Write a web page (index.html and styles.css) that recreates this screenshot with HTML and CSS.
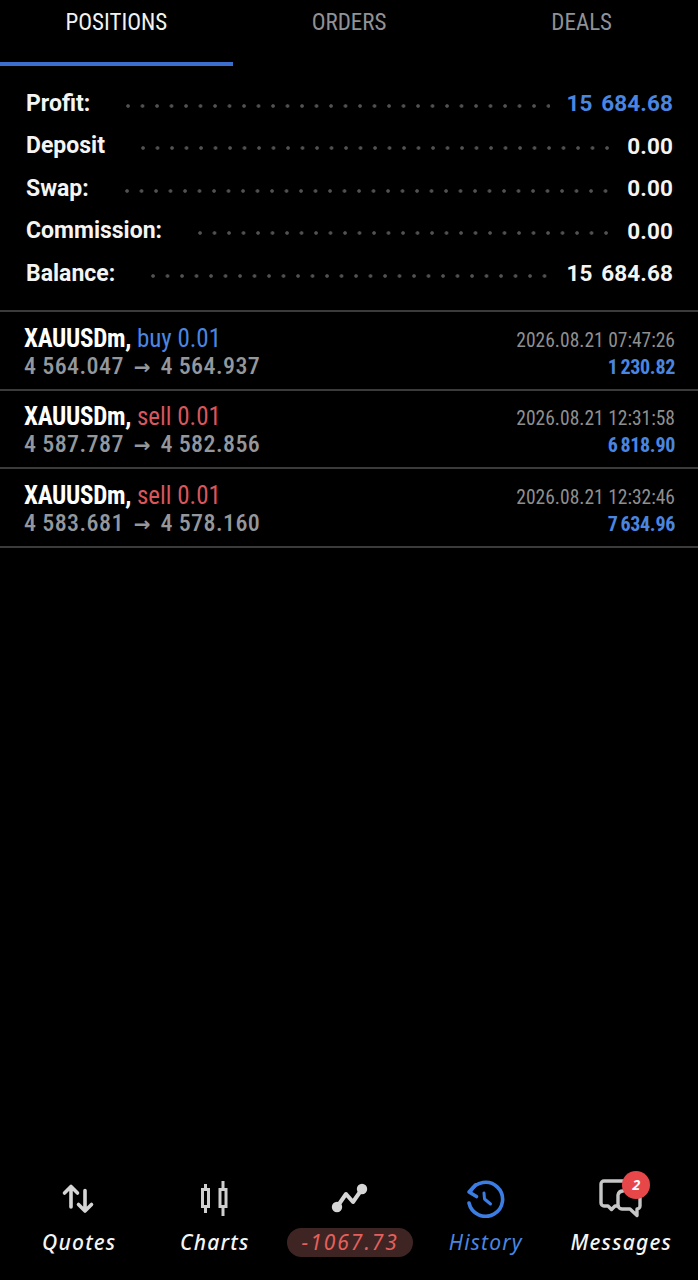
FILE: index.html
```html
<!DOCTYPE html>
<html lang="en">
<head>
<meta charset="utf-8">
<title>History</title>
<link rel="stylesheet" href="styles.css">
</head>
<body>
<div class="app">
  <nav class="tabs">
    <div class="tab active">POSITIONS</div>
    <div class="tab">ORDERS</div>
    <div class="tab">DEALS</div>
  </nav>
  <section class="summary">
    <div class="sum-row"><span class="sum-label">Profit:</span><span class="dots"></span><span class="sum-val blue">15 684.68</span></div>
    <div class="sum-row"><span class="sum-label">Deposit</span><span class="dots"></span><span class="sum-val">0.00</span></div>
    <div class="sum-row"><span class="sum-label">Swap:</span><span class="dots"></span><span class="sum-val">0.00</span></div>
    <div class="sum-row"><span class="sum-label">Commission:</span><span class="dots"></span><span class="sum-val">0.00</span></div>
    <div class="sum-row"><span class="sum-label">Balance:</span><span class="dots"></span><span class="sum-val">15 684.68</span></div>
  </section>
  <section class="deals">
    <div class="deal">
      <div class="deal-line"><span class="title"><b>XAUUSDm,</b> <span class="blue">buy 0.01</span></span><span class="time">2026.08.21 07:47:26</span></div>
      <div class="deal-line"><span class="price">4 564.047 <span class="arrow">→</span> 4 564.937</span><span class="pnl">1 230.82</span></div>
    </div>
    <div class="deal">
      <div class="deal-line"><span class="title"><b>XAUUSDm,</b> <span class="red">sell 0.01</span></span><span class="time">2026.08.21 12:31:58</span></div>
      <div class="deal-line"><span class="price">4 587.787 <span class="arrow">→</span> 4 582.856</span><span class="pnl">6 818.90</span></div>
    </div>
    <div class="deal">
      <div class="deal-line"><span class="title"><b>XAUUSDm,</b> <span class="red">sell 0.01</span></span><span class="time">2026.08.21 12:32:46</span></div>
      <div class="deal-line"><span class="price">4 583.681 <span class="arrow">→</span> 4 578.160</span><span class="pnl">7 634.96</span></div>
    </div>
  </section>
  <div class="spacer"></div>
  <nav class="bottom">
    <div class="item">
      <svg class="icon" viewBox="0 0 44 40" fill="none" stroke="#d6d6d6" stroke-width="3.6" stroke-linecap="round" stroke-linejoin="round"><path d="M14 8.500V29M7.500 15 14 8.500 20.500 15"/><path d="M28 12.500V33M21.500 26.500 28 33 34.500 26.500"/></svg>
      <span class="lbl">Quotes</span>
    </div>
    <div class="item">
      <svg class="icon" viewBox="0 0 44 40" fill="none" stroke="#cfcfcf" stroke-width="3"><rect x="9.500" y="11.500" width="6" height="17"/><path d="M12.500 6v5.500M12.500 28.500V35"/><rect x="27" y="11.500" width="6" height="17"/><path d="M30 3v8.500M30 28.500V38"/></svg>
      <span class="lbl">Charts</span>
    </div>
    <div class="item">
      <svg class="icon" viewBox="0 0 44 40" fill="none"><path d="M9 29 18 16 25 24 34 11" stroke="#d6d6d6" stroke-width="4" stroke-linecap="round" stroke-linejoin="round"/><circle cx="9" cy="29" r="5.200" fill="#d6d6d6"/><circle cx="34" cy="11" r="5.200" fill="#d6d6d6"/></svg>
      <span class="lbl pill">-1067.73</span>
    </div>
    <div class="item">
      <svg class="icon" viewBox="0 0 44 40" fill="none" stroke="#3b7de2" stroke-width="3.600" stroke-linecap="round" stroke-linejoin="round"><path d="M6.500 13.500A17 17 0 1 1 5 25"/><path d="M11.500 7 5 14 12.500 18.500"/><path d="M20 15 20.500 21 26.500 26" stroke="#3b7de2" stroke-width="3"/></svg>
      <span class="lbl hist">History</span>
    </div>
    <div class="item">
      <span class="msg-wrap">
        <svg class="icon" viewBox="0 0 44 40" fill="none" stroke="#c6c6c6" stroke-width="3.400" stroke-linejoin="round" stroke-linecap="round"><path d="M29 9V6a3 3 0 0 0-3-3H5a3 3 0 0 0-3 3v19a3 3 0 0 0 3 3h4l3.500 3.500L16 28h3"/><path d="M24 13a5 5 0 0 0-5 4v10a4 4 0 0 0 4 4h8l7 6.500V31h0a3 3 0 0 0 3-3V15"/></svg>
        <span class="badge">2</span>
      </span>
      <span class="lbl">Messages</span>
    </div>
  </nav>
</div>
</body>
</html>
```
FILE: styles.css
```css
* { box-sizing: border-box; }
html, body { margin: 0; padding: 0; background: #000; }
body { width: 698px; height: 1280px; overflow: hidden; font-family: Roboto, "Liberation Sans", sans-serif; color: #fff; }
.app { height: 1280px; display: flex; flex-direction: column; }
.blue { color: #4a86e0; }
.red { color: #d9565c; }

.tabs { display: flex; height: 66px; }
.tab { width: 233px; height: 66px; padding-top: 10px; text-align: center; font-size: 23px; font-stretch: 85%; line-height: 26px; color: #8f9296; border-bottom: 4px solid transparent; }
.tab.active { color: #f2f2f2; border-bottom-color: #3a6fd0; }

.summary { height: 246px; padding: 16px 25px 0 26px; border-bottom: 2px solid #3a3b3d; }
.sum-row { height: 42.500px; display: flex; align-items: center; font-size: 23px; font-weight: 700; }
.sum-label { color: #f4f4f4; }
.dots { flex: 1; height: 6px; margin: 5px 17px 0 35px; background-image: radial-gradient(circle at 3px 3px, #515254 1.400px, transparent 2.200px); background-size: 14.500px 6px; background-repeat: repeat-x; background-position: left; }
.sum-val { color: #f4f4f4; font-size: 22.500px; letter-spacing: 0.1px; word-spacing: 3px; }
.sum-val.blue { color: #4a86e0; }

.deal { height: 78.500px; padding: 11.500px 23px 0 24px; border-bottom: 2px solid #3a3b3d; }
.deal-line { display: flex; justify-content: space-between; align-items: baseline; height: 27px; }
.title { font-size: 25px; line-height: 30px; font-stretch: 85%; white-space: nowrap; }
.title b { font-weight: 700; color: #fff; letter-spacing: -0.3px; }
.price { font-size: 24px; line-height: 30px; font-weight: 500; font-stretch: 85%; color: #94979c; letter-spacing: 0.4px; white-space: nowrap; }
.arrow { font-family: "DejaVu Sans", sans-serif; font-weight: 700; font-size: 20px; font-stretch: normal; letter-spacing: 0; margin: 0 4px; }
.time { font-size: 19.500px; font-stretch: 85%; color: #8f8f8f; white-space: nowrap; }
.pnl { font-size: 20px; font-weight: 700; font-stretch: 85%; letter-spacing: -0.3px; word-spacing: -1.500px; color: #4a86e0; white-space: nowrap; }

.spacer { flex: 1; }
.bottom { display: grid; grid-template-columns: repeat(5, 135.500px); padding: 0 0 23px 11.500px; }
.item { display: flex; flex-direction: column; align-items: center; justify-content: flex-end; gap: 10px; }
.icon { width: 44px; height: 40px; display: block; }
.lbl { font-family: "Noto Sans", sans-serif; font-style: italic; font-weight: 500; font-size: 21px; line-height: 29px; letter-spacing: 1.200px; color: #f5f5f5; white-space: nowrap; }
.pill { width: 126px; height: 29px; border-radius: 15px; background: #3e2523; color: #e5605c; text-align: center; font-weight: 400; letter-spacing: 2px; }
.hist { color: #4a86e0; font-weight: 400; }
.msg-wrap { position: relative; display: block; width: 44px; height: 40px; }
.badge { position: absolute; left: 23px; top: -7px; width: 28px; height: 28px; border-radius: 50%; background: #e8474a; color: #fff; font-family: "Noto Sans", sans-serif; font-style: italic; font-size: 14px; line-height: 28px; text-align: center; font-weight: 700; }
```
